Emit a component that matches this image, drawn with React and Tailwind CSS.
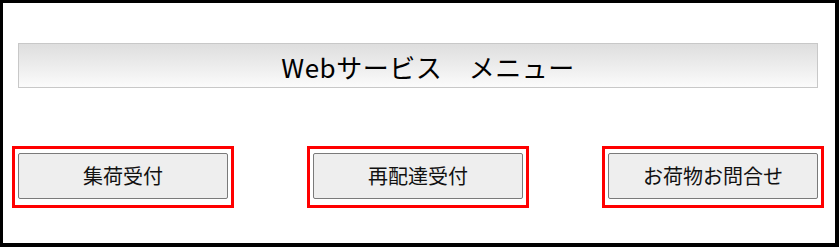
import React from 'react';

const menuItems = ['集荷受付', '再配達受付', 'お荷物お問合せ'];

function MenuButton({ label }) {
  return (
    <div className="border-[3px] border-[#ff0000] pt-[4px] pb-[6px] px-[3px] w-[222px]">
      <button
        type="button"
        className="w-full h-[46px] flex items-center justify-center bg-[#eeeeee] border border-[#7a7a7a] rounded-[2px] text-[20px] leading-none text-[#111]"
      >
        {label}
      </button>
    </div>
  );
}

export default function App() {
  return (
    <div
      className="w-[839px] h-[247px] bg-white border-t-[3px] border-l-[3px] border-r-[4px] border-b-[4px] border-black flex flex-col"
      style={{ fontFamily: '"Noto Sans CJK JP", "Noto Sans", sans-serif' }}
    >
      {/* Title bar */}
      <div className="mt-[40px] ml-[15px] w-[800px] h-[45px] border border-[#c8c8c8] bg-gradient-to-b from-[#dedede] to-[#fbfbfb] flex items-center justify-center pl-[20px]">
        <h1 className="text-[26px] leading-none text-black tracking-[0.5px] pt-[2px]">Webサービス　メニュー</h1>
      </div>

      {/* Menu buttons */}
      <div className="mt-[58px] pl-[9px] pr-[11px] flex justify-between">
        {menuItems.map(item => (
          <MenuButton key={item} label={item} />
        ))}
      </div>
    </div>
  );
}
